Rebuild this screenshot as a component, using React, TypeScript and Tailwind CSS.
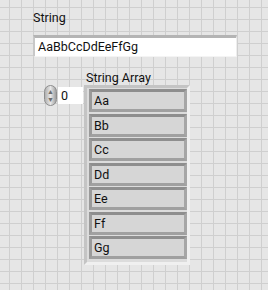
import React from 'react';

const items = ['Aa', 'Bb', 'Cc', 'Dd', 'Ee', 'Ff', 'Gg'];

export default function App() {
  return (
    <div
      className="w-[268px] h-[290px] bg-[#e6e6e6] bg-[linear-gradient(to_right,#cfcfcf_1px,transparent_1px),linear-gradient(to_bottom,#cfcfcf_1px,transparent_1px)] bg-[size:12px_12px] bg-[position:9px_7px] text-[#111] text-[12.5px] overflow-hidden"
      style={{ fontFamily: 'Roboto, "Noto Sans", sans-serif' }}
    >
      <div className="pt-[9px] pl-[33px]">
        <div className="leading-[18px]">String</div>
        <div className="mt-[8px] w-[204px] h-[22px] bg-white border-t-[3px] border-l-[2px] border-t-[#b4b4b4] border-l-[#c8c8c8] border-r border-b border-r-[#eeeeee] border-b-[#f4f4f4] pl-[3px] leading-[17px]">
          AaBbCcDdEeFfGg
        </div>
      </div>

      <div className="flex pl-[44px] mt-[12px]">
        <div className="flex items-start mt-[16px]">
          <div className="w-[13px] h-[21px] rounded-full bg-gradient-to-r from-[#b0b0b0] via-[#e8e8e8] to-[#a0a0a0] border border-[#8d8d8d] flex flex-col items-center justify-center text-[#6d6d6d] text-[7px] leading-[8px]">
            <span>▲</span>
            <span>▼</span>
          </div>
          <div className="ml-[1px] mt-[2px] w-[25px] h-[17px] bg-white pl-[3px] leading-[17px]">0</div>
        </div>

        <div className="ml-[1px]">
          <div className="leading-[18px] pl-[2px]">String Array</div>
          <div className="mt-[-2px] w-[106px] bg-[#dcdcdc] border-l-[3px] border-t-[3px] border-l-[#c4c4c4] border-t-[#c4c4c4] border-r-[3px] border-b-[3px] border-r-[#f0f0f0] border-b-[#f0f0f0] pl-[2px] pt-[1px] pb-[3px] flex flex-col gap-[1.5px]">
            {items.map(t => (
              <div
                key={t}
                className="w-[98px] h-[23px] bg-[#d6d6d6] border-t-[3px] border-l-[3px] border-t-[#8e8e8e] border-l-[#9a9a9a] border-r-[3px] border-b-[3px] border-r-[#a6a6a6] border-b-[#a0a0a0] pl-[2px] leading-[17px]"
              >
                {t}
              </div>
            ))}
          </div>
        </div>
      </div>
    </div>
  );
}
